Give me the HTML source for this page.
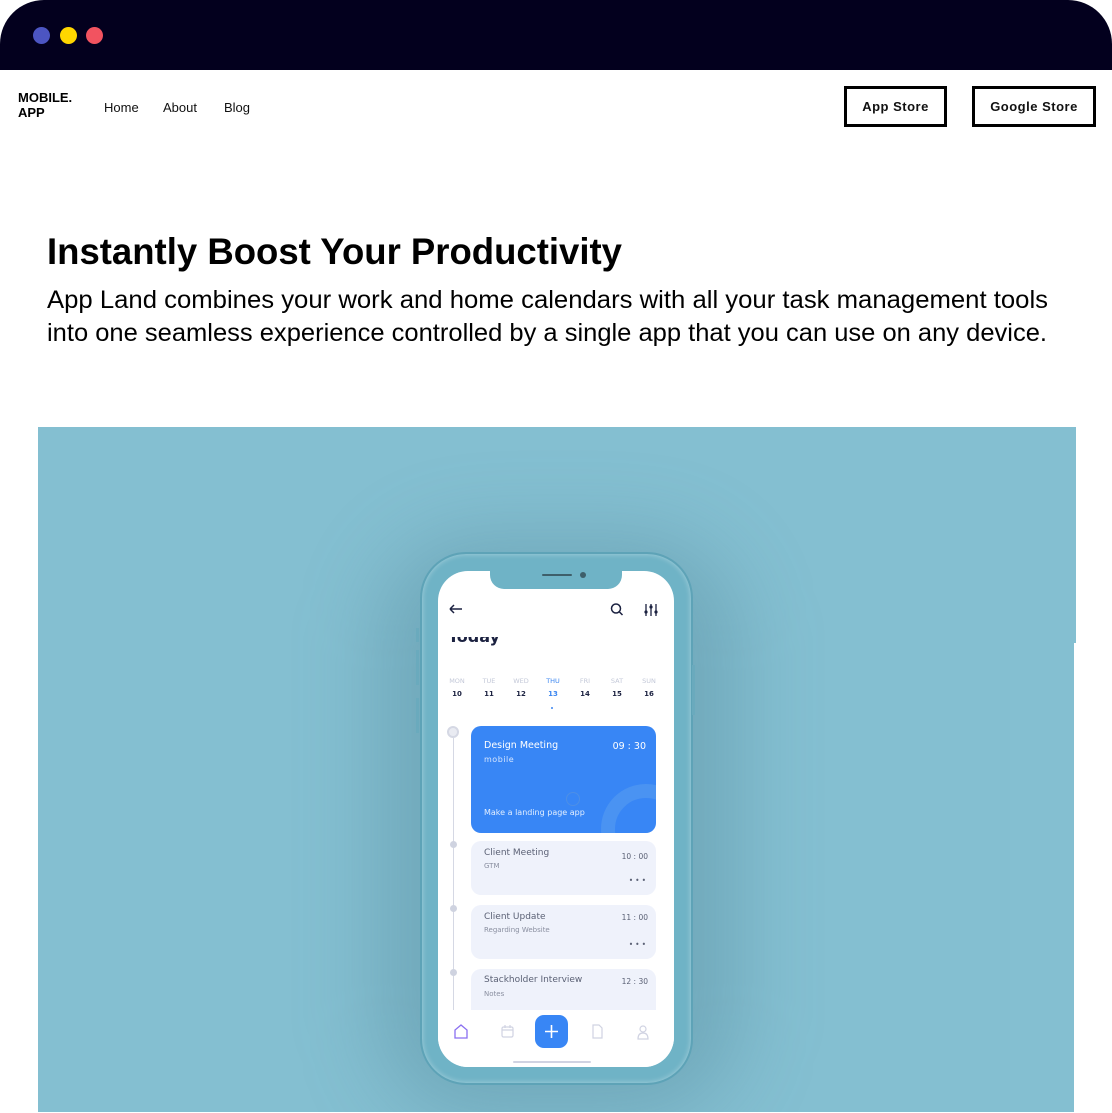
<!DOCTYPE html>
<html><head><meta charset="utf-8"><style>
*{margin:0;padding:0;box-sizing:border-box}
body{width:1112px;height:1112px;overflow:hidden;background:#fff;font-family:"Liberation Sans",sans-serif;position:relative}
.a{position:absolute}
.bar{left:0;top:0;width:1112px;height:70px;background:#03001e;border-radius:44px 44px 0 0}
.dot{width:17px;height:17px;border-radius:50%;top:27px}
.nav{font-size:13px;color:#111;top:100px}
.btn{border:3px solid #000;font-size:13px;font-weight:bold;letter-spacing:.5px;display:flex;align-items:center;justify-content:center;color:#111;top:86px;height:41px}
.ph{font-family:"DejaVu Sans","Liberation Sans",sans-serif}
.day{font-size:6.5px;color:#c3c8d8;width:30px;text-align:center}
.num{font-size:7px;color:#1b2140;font-weight:bold;width:30px;text-align:center}
.card{left:471px;width:185px;background:#eff2fb;border-radius:10px}
.ct{font-size:9px;color:#5b6175}
.cs{font-size:7px;color:#8a8fa0}
.tm{font-size:7.5px;color:#5b6175;text-align:right;width:60px}
.tdot{width:7px;height:7px;border-radius:50%;background:#cfd3e0;left:450px}
</style></head><body>
<div class="a bar"></div>
<div class="a dot" style="left:33px;background:#4c55c2"></div>
<div class="a dot" style="left:60px;background:#ffd600"></div>
<div class="a dot" style="left:86px;background:#f25360"></div>
<div class="a" style="left:18px;top:90px;font-size:13px;font-weight:bold;line-height:15px;color:#000">MOBILE.<br>APP</div>
<div class="a nav" style="left:104px">Home</div>
<div class="a nav" style="left:163px">About</div>
<div class="a nav" style="left:224px">Blog</div>
<div class="a btn" style="left:844px;width:103px">App Store</div>
<div class="a btn" style="left:972px;width:124px">Google Store</div>
<svg class="a" style="left:0;top:220px" width="1112" height="140">
<text x="47" y="44" font-family="Liberation Sans" font-weight="bold" font-size="37" fill="#000" textLength="575" lengthAdjust="spacingAndGlyphs">Instantly Boost Your Productivity</text>
<text x="47" y="88" font-family="Liberation Sans" font-size="25" fill="#000" textLength="1001" lengthAdjust="spacingAndGlyphs">App Land combines your work and home calendars with all your task management tools</text>
<text x="47" y="121" font-family="Liberation Sans" font-size="25" fill="#000" textLength="1000" lengthAdjust="spacingAndGlyphs">into one seamless experience controlled by a single app that you can use on any device.</text>
</svg>
<div class="a" style="left:38px;top:427px;width:1038px;height:685px;background:#84bfd1;overflow:hidden">
 <div class="a" style="left:340px;top:110px;width:360px;height:580px;border-radius:100px;background:rgba(60,110,130,.28);filter:blur(40px)"></div>
</div>
<div class="a" style="left:1074px;top:643px;width:3px;height:470px;background:#fff"></div>
<!-- phone -->
<div class="a" style="left:420px;top:552px;width:273px;height:533px;border-radius:46px;background:#6fb3c6;border:2px solid #5ea3b7;box-shadow:inset 0 0 6px rgba(255,255,255,.4)"></div>
<div class="a" style="left:416px;top:628px;width:3px;height:14px;background:#6aaabd"></div>
<div class="a" style="left:416px;top:650px;width:3px;height:35px;background:#6aaabd"></div>
<div class="a" style="left:416px;top:698px;width:3px;height:35px;background:#6aaabd"></div>
<div class="a" style="left:692px;top:665px;width:3px;height:50px;background:#6aaabd"></div>
<div class="a" style="left:438px;top:571px;width:236px;height:496px;border-radius:30px;background:#fff;overflow:hidden">
 <div class="a" style="left:52px;top:-2px;width:132px;height:20px;background:#6fb3c6;border-radius:0 0 14px 14px"></div>
 <div class="a" style="left:104px;top:3px;width:30px;height:2px;background:#3e5f6a;border-radius:2px"></div>
 <div class="a" style="left:142px;top:1px;width:6px;height:6px;background:#3e5f6a;border-radius:50%"></div>
</div>
<div class="a ph" style="left:448px;top:637px;width:60px;height:11px;overflow:hidden"><div style="margin-top:-10px;font-size:16px;font-weight:bold;color:#1b2140">Today</div></div>
<svg class="a" style="left:446px;top:600px" width="220" height="20">
 <path d="M4 9h12M4 9l4-4M4 9l4 4" stroke="#1b2140" stroke-width="1.5" fill="none"/>
 <circle cx="170" cy="8.5" r="4.5" stroke="#1b2140" stroke-width="1.5" fill="none"/><path d="M173.5 12l3 3" stroke="#1b2140" stroke-width="1.5"/>
 <path d="M200 4v12M205 4v12M210 4v12" stroke="#1b2140" stroke-width="1.3"/><circle cx="200" cy="12" r="1.6" fill="#1b2140"/><circle cx="205" cy="7" r="1.6" fill="#1b2140"/><circle cx="210" cy="12" r="1.6" fill="#1b2140"/>
</svg>
<div class="a ph day" style="left:442px;top:677px">MON</div><div class="a ph num" style="left:442px;top:690px">10</div>
<div class="a ph day" style="left:474px;top:677px">TUE</div><div class="a ph num" style="left:474px;top:690px">11</div>
<div class="a ph day" style="left:506px;top:677px">WED</div><div class="a ph num" style="left:506px;top:690px">12</div>
<div class="a ph day" style="left:538px;top:677px;color:#3b86f0">THU</div><div class="a ph num" style="left:538px;top:690px;color:#3b86f0">13</div>
<div class="a ph day" style="left:570px;top:677px">FRI</div><div class="a ph num" style="left:570px;top:690px">14</div>
<div class="a ph day" style="left:602px;top:677px">SAT</div><div class="a ph num" style="left:602px;top:690px">15</div>
<div class="a ph day" style="left:634px;top:677px">SUN</div><div class="a ph num" style="left:634px;top:690px">16</div>
<div class="a" style="left:551px;top:707px;width:2px;height:2px;background:#3b86f0;border-radius:50%"></div>
<div class="a" style="left:447px;top:726px;width:12px;height:12px;border-radius:50%;border:2px solid #d5d8e4;background:#e9ebf2"></div>
<div class="a" style="left:452.5px;top:738px;width:1.5px;height:272px;background:#d5d8e4"></div>
<div class="a tdot" style="top:841px"></div><div class="a tdot" style="top:905px"></div><div class="a tdot" style="top:969px"></div>
<div class="a" style="left:471px;top:726px;width:185px;height:107px;border-radius:10px;background:#3886f5;overflow:hidden">
 <div class="a" style="left:130px;top:58px;width:90px;height:90px;border-radius:50%;border:14px solid #4a93f2"></div>
 <div class="a" style="left:95px;top:66px;width:14px;height:14px;border-radius:50%;border:1.5px solid #4d8fe6"></div>
</div>
<div class="a ph" style="left:484px;top:740px;font-size:9.5px;color:#fff">Design Meeting</div>
<div class="a ph" style="left:484px;top:755px;font-size:8px;color:#d6e6ff;letter-spacing:.5px">mobile</div>
<div class="a ph" style="left:585px;top:741px;font-size:9.5px;color:#fff;text-align:right;width:61px">09 : 30</div>
<div class="a ph" style="left:484px;top:808px;font-size:8px;color:#e2eeff">Make a landing page app</div>
<div class="a card" style="top:841px;height:54px"></div>
<div class="a ph ct" style="left:484px;top:848px">Client Meeting</div>
<div class="a ph cs" style="left:484px;top:862px">GTM</div>
<div class="a ph tm" style="left:588px;top:852px">10 : 00</div>
<div class="a ph tm" style="left:588px;top:876px;letter-spacing:2px">•••</div>
<div class="a card" style="top:905px;height:54px"></div>
<div class="a ph ct" style="left:484px;top:912px">Client Update</div>
<div class="a ph cs" style="left:484px;top:926px">Regarding Website</div>
<div class="a ph tm" style="left:588px;top:913px">11 : 00</div>
<div class="a ph tm" style="left:588px;top:940px;letter-spacing:2px">•••</div>
<div class="a card" style="top:969px;height:60px"></div>
<div class="a ph ct" style="left:484px;top:975px">Stackholder Interview</div>
<div class="a ph cs" style="left:484px;top:990px">Notes</div>
<div class="a ph tm" style="left:588px;top:977px">12 : 30</div>
<div class="a" style="left:438px;top:1010px;width:236px;height:57px;background:#fff;border-radius:0 0 30px 30px"></div>
<div class="a" style="left:535px;top:1015px;width:33px;height:33px;border-radius:9px;background:#3886f5"></div>
<svg class="a" style="left:438px;top:1015px" width="236" height="52">
 <path d="M113.5 10v13M107 16.5h13" stroke="#fff" stroke-width="1.6"/>
 <path d="M17 23v-8l6-5 6 5v8z" stroke="#8a6ff0" stroke-width="1.3" fill="none"/>
 <rect x="64" y="12" width="11" height="10" rx="1.5" stroke="#d0d3e2" stroke-width="1.2" fill="none"/><path d="M64 15h11M67 10v3M72 10v3" stroke="#d0d3e2" stroke-width="1.2"/>
 <path d="M155 10h6l3 3v10h-9z" stroke="#d0d3e2" stroke-width="1.2" fill="none"/>
 <circle cx="205" cy="14" r="3" stroke="#d0d3e2" stroke-width="1.2" fill="none"/><path d="M200 24q0-6 5-6t5 6z" stroke="#d0d3e2" stroke-width="1.2" fill="none"/>
 <rect x="75" y="46" width="78" height="2" rx="1" fill="#d0d3e2"/>
</svg>
</body></html>
